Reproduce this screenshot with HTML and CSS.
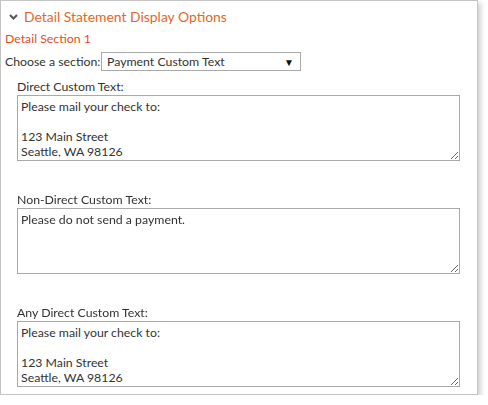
FILE: index.html
```html
<!DOCTYPE html>
<html>
<head>
<meta charset="utf-8">
<link rel="stylesheet" href="styles.css">
</head>
<body>
<div class="panel">
  <div class="header">
    <svg class="chev" width="9" height="6" viewBox="0 0 9 6"><path d="M1 1 L4.5 4.5 L8 1" fill="none" stroke="#555" stroke-width="2"/></svg>
    <span class="title">Detail Statement Display Options</span>
  </div>
  <div class="section-title">Detail Section 1</div>
  <div class="choose-row">
    <span class="choose-label">Choose a section:</span>
    <div class="select"><span>Payment Custom Text</span><span class="arrow">▼</span></div>
  </div>
  <div class="field first">
    <div class="label">Direct Custom Text:</div>
    <textarea class="ta">Please mail your check to:

123 Main Street
Seattle, WA 98126</textarea>
  </div>
  <div class="field">
    <div class="label">Non-Direct Custom Text:</div>
    <textarea class="ta">Please do not send a payment.</textarea>
  </div>
  <div class="field">
    <div class="label">Any Direct Custom Text:</div>
    <textarea class="ta">Please mail your check to:

123 Main Street
Seattle, WA 98126</textarea>
  </div>
</div>
</body>
</html>
```
FILE: styles.css
```css
html, body {
  margin: 0;
  padding: 0;
  background: #fff;
}
body {
  font-family: "Lato", "Open Sans", sans-serif;
  font-size: 12.3px;
  color: #333;
}
.panel {
  width: 478px;
  height: 395px;
  box-sizing: border-box;
  border: 1px solid #c4c4c4;
  box-shadow: 3px 3px 5px rgba(0,0,0,0.18);
  padding: 0 0 0 4px;
  overflow: hidden;
}
.header {
  display: flex;
  align-items: center;
  height: 30px;
  padding-left: 4px;
}
.chev {
  margin-right: 6px;
  margin-top: 1px;
}
.title {
  font-size: 13.9px;
  color: #e5682a;
  white-space: nowrap;
}
.section-title {
  color: #e44e24;
  line-height: 15px;
  height: 20px;
  white-space: nowrap;
}
.choose-row {
  display: flex;
  align-items: center;
  height: 19px;
  margin-top: 1px;
}
.choose-label {
  width: 96px;
  flex-shrink: 0;
  white-space: nowrap;
}
.select {
  width: 200px;
  height: 19px;
  box-sizing: border-box;
  border: 1px solid #a9a9a9;
  display: flex;
  align-items: center;
  justify-content: space-between;
  padding: 0 6px 0 5px;
  white-space: nowrap;
}
.arrow {
  font-size: 10px;
  color: #111;
}
.field {
  margin-left: 12px;
}
.field.first {
  margin-top: 8px;
}
.label {
  line-height: 15px;
  margin-bottom: 1px;
  white-space: nowrap;
}
.ta {
  display: block;
  width: 443px;
  height: 66px;
  box-sizing: border-box;
  border: 1px solid #a9a9a9;
  margin: 0 0 31px 0;
  padding: 3px 3px;
  font-family: "Lato", "Open Sans", sans-serif;
  font-size: 12.3px;
  line-height: 15px;
  color: #333;
  outline: none;
  resize: vertical;
}
```
